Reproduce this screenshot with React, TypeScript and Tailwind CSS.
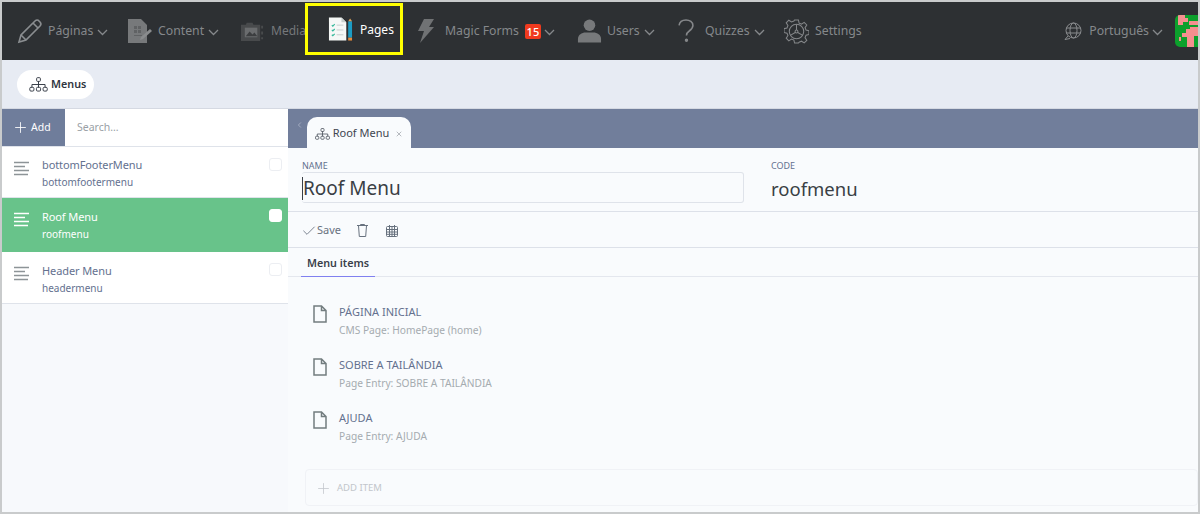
import React from 'react';
import { Check, ChevronLeft, Plus, X } from 'lucide-react';

const font = { fontFamily: '"Noto Sans", "Open Sans", sans-serif' };

const MenusIcon = ({ className }: { className?: string }) => (
  <svg viewBox="0 0 20 16" fill="none" stroke="currentColor" strokeWidth="1" className={className}>
    <rect x="8" y="0.7" width="4" height="4" rx="1" />
    <path d="M10 4.700v3.300M3 11V8h14v3M10 8v3" />
    <rect x="0.7" y="11" width="4.400" height="4" rx="1.200" />
    <rect x="7.800" y="11" width="4.400" height="4" rx="1.200" />
    <rect x="14.900" y="11" width="4.400" height="4" rx="1.200" />
  </svg>
);

const Caret = () => (
  <svg viewBox="0 0 11 7" fill="none" stroke="#85888b" strokeWidth="1.300" className="w-[11px] h-[7px] mt-[3px] shrink-0">
    <path d="M1 1l4.500 4.500L10 1" />
  </svg>
);

const Pencil = () => (
  <svg viewBox="0 0 26 26" fill="none" stroke="#8a8d90" strokeWidth="1.600" className="w-[26px] h-[26px] shrink-0">
    <path d="M2 24l2-7L18 3c1.400-1.400 3-1.400 4 0l1 1c1.200 1.200 1.200 2.600 0 4L9 22z" />
    <path d="M4 17l5 5M16 5l5 5" />
  </svg>
);

const ContentIcon = () => (
  <svg viewBox="0 0 26 26" className="w-[26px] h-[26px] shrink-0">
    <path d="M1 1h13l6 6v18H1z" fill="#77797b" />
    <path d="M7 8h3v3H7zM11 8h3v3h-3zM7 12h3v3H7zM11 12h3v3h-3zM7 17h8v1H7z" fill="#606264" />
    <path d="M14 19l9-8 2 2-9 8-3 1z" fill="#8a8c8e" />
  </svg>
);

const MediaIcon = () => (
  <svg viewBox="0 0 26 26" className="w-[25px] h-[25px] shrink-0">
    <path d="M1 6h5l1-2h6l1 2h7v17H1z" fill="#484a4c" />
    <rect x="5" y="9" width="13" height="10" fill="#6a6c6e" />
    <path d="M6 18l4-5 3 3 2-2 3 4z" fill="#3c3e40" />
    <path d="M23 7v3M23 13v3M23 19v2" stroke="#484a4c" strokeWidth="2" />
  </svg>
);

const PagesIcon = () => (
  <svg viewBox="0 0 26 26" className="w-[25px] h-[26px] shrink-0">
    <path d="M1 1h13l5 5v19H1z" fill="#f5f7f6" />
    <path d="M14 1l5 5h-5z" fill="#c9cfcd" />
    <path d="M4 9l1 1 2-2M4 14l1 1 2-2M4 19l1 1 2-2" stroke="#35b89a" strokeWidth="1.200" fill="none" />
    <path d="M9 9h7M9 14h7M9 19h7" stroke="#c5cccb" strokeWidth="1" />
    <rect x="21" y="5" width="4" height="17" fill="#1c9cc4" />
    <path d="M21 5l2-3 2 3z" fill="#d8a25e" />
    <rect x="21" y="22" width="4" height="3" fill="#e58a3c" />
  </svg>
);

const Bolt = () => (
  <svg viewBox="0 0 18 26" className="w-[18px] h-[26px] shrink-0">
    <path d="M7 1h10l-5 8h5L3 25l4-12H1z" fill="#707274" />
  </svg>
);

const UserIcon = () => (
  <svg viewBox="0 0 26 26" className="w-[25px] h-[26px] shrink-0">
    <circle cx="13" cy="7" r="6" fill="#77797b" />
    <path d="M1 25v-4c0-4 4-6.500 8-6.500h8c4 0 8 2.500 8 6.500v4z" fill="#77797b" />
  </svg>
);

const Help = () => (
  <svg viewBox="0 0 18 26" fill="none" stroke="#85878a" strokeWidth="1.700" className="w-[18px] h-[24px] shrink-0">
    <path d="M1.500 7C2 3 5 1 9 1s7.500 2.500 7.500 6c0 3-2 4.500-4 6-2 1.300-3 2.500-3 5" />
    <circle cx="9.500" cy="23" r="1" fill="#85878a" />
  </svg>
);

const Gear = () => (
  <svg viewBox="0 0 26 26" fill="none" stroke="#85878a" strokeWidth="1.100" className="w-[25px] h-[25px] shrink-0">
    <path d="M11 1h4l.7 3.300 2.500 1 2.800-1.800 2.700 2.700-1.800 2.800 1 2.500 3.100.7v4l-3.100.7-1 2.500 1.800 2.800-2.700 2.700-2.800-1.800-2.500 1L15 25h-4l-.7-3.100-2.500-1L5 22.700 2.300 20l1.800-2.800-1-2.500L0 14v-4l3.100-.7 1-2.500L2.300 4 5 1.300l2.800 1.800 2.500-1z" />
    <circle cx="13" cy="13" r="7.500" />
    <circle cx="13" cy="13" r="1.500" />
    <path d="M13 5.500v6M11.700 14L6.500 17M14.300 14l5.200 3" />
  </svg>
);

const Globe = () => (
  <svg viewBox="0 0 18 18" fill="none" stroke="#8a8c8f" strokeWidth="1" className="w-[18px] h-[18px] shrink-0">
    <circle cx="9.500" cy="8.500" r="7.500" />
    <ellipse cx="9.500" cy="8.500" rx="3.500" ry="7.500" />
    <path d="M2 6h15M2 11h15M4 14l-3 3.500 5-1" />
  </svg>
);

const Avatar = () => (
  <svg viewBox="0 0 23 32" className="w-[23px] h-[32px] rounded-l-[5px]">
    <rect width="23" height="32" fill="#0ca02c" />
    <path d="M3 0h7v3h3v4H8v3H3zM14 6h9v4h-9zM4 22h3v-4h4v-4h4v-2h8v9h-4v11h-7V22H6v4H4z" fill="#f48f8f" />
  </svg>
);

const LinesIcon = ({ light }: { light?: boolean }) => (
  <svg viewBox="0 0 15 15" fill="none" stroke={light ? '#ffffff' : '#8d9497'} strokeWidth="1.300" className="w-[15px] h-[15px]">
    <path d="M0 1.500h15M0 5.500h11M0 9.500h15M0 13.500h14" />
  </svg>
);

const FileIcon = () => (
  <svg viewBox="0 0 14 18" fill="none" stroke="#737d7f" strokeWidth="1.500" className="w-[14px] h-[18px]">
    <path d="M1 1h7.500L13 5.500V17H1zM8.500 1v4.500H13" />
  </svg>
);

const Trash = () => (
  <svg viewBox="0 0 11 13" fill="none" stroke="#68727f" strokeWidth="1" className="w-[11px] h-[13px]">
    <path d="M0 1.500h11M3.500 1.500V.5h4v1M1.500 1.500l.8 11h6.400l.8-11" />
  </svg>
);

const CalendarIcon = () => (
  <svg viewBox="0 0 12 12" fill="none" stroke="#68727f" strokeWidth="1" className="w-[12px] h-[12px]">
    <rect x="0.5" y="1.500" width="11" height="10" rx="1" />
    <path d="M0.500 4.500h11M0.500 7h11M0.500 9.300h11M3.500 0v11.500M6 1.500v10M8.500 0v11.500" />
  </svg>
);

type NavItem = { label: string; icon: React.ReactNode; width: string; gap: string; caret?: boolean; badge?: boolean };

const navLeft: NavItem[] = [
  { label: 'Páginas', icon: <Pencil />, width: 'w-[110px]', gap: 'gap-[5px]', caret: true },
  { label: 'Content', icon: <ContentIcon />, width: 'w-[113px]', gap: 'gap-[5px]', caret: true },
];

const navRight: NavItem[] = [
  { label: 'Magic Forms', icon: <Bolt />, width: 'w-[160px]', gap: 'gap-[10px]', caret: true, badge: true },
  { label: 'Users', icon: <UserIcon />, width: 'w-[100px]', gap: 'gap-[5px]', caret: true },
  { label: 'Quizzes', icon: <Help />, width: 'w-[107px]', gap: 'gap-[10px]', caret: true },
  { label: 'Settings', icon: <Gear />, width: 'w-[90px]', gap: 'gap-[6px]' },
];

const Nav = ({ item }: { item: NavItem }) => (
  <div className={`flex items-center shrink-0 ${item.width} ${item.gap}`}>
    {item.icon}
    <div className="flex items-center gap-[4px]">
      <span className="text-[12.25px] text-[#85888b]">{item.label}</span>
      {item.badge && <span className="w-[16px] h-[15px] mt-[1px] ml-[2px] -mr-[1px] bg-[#f03a1e] rounded-[2px] text-white text-[11px] leading-[16px] text-center font-medium">15</span>}
      {item.caret && <Caret />}
    </div>
  </div>
);

const menus = [
  { title: 'bottomFooterMenu', code: 'bottomfootermenu', height: 'h-[51px]', top: 'mt-[9px]' },
  { title: 'Roof Menu', code: 'roofmenu', height: 'h-[54px]', top: 'mt-[10px]', active: true },
  { title: 'Header Menu', code: 'headermenu', height: 'h-[52px]', top: 'mt-[10px]' },
];

const entries = [
  { title: 'PÁGINA INICIAL', sub: 'CMS Page: HomePage (home)' },
  { title: 'SOBRE A TAILÂNDIA', sub: 'Page Entry: SOBRE A TAILÂNDIA' },
  { title: 'AJUDA', sub: 'Page Entry: AJUDA' },
];

export default function App() {
  return (
    <div style={font} className="w-[1200px] h-[514px] overflow-hidden border-2 border-[#c9cbcc] bg-[#e7ebf3] flex flex-col">
      <header className="h-[58px] shrink-0 bg-[#2d3033] flex pl-[15px]">
        {navLeft.map((item) => <Nav key={item.label} item={item} />)}
        <div className="w-[65px] shrink-0 flex items-center gap-[6px]">
          <MediaIcon />
          <span className="text-[12px] text-[#75787b]">Media</span>
        </div>
        <div className="w-[98px] h-[52px] mt-[1px] shrink-0 border-[3px] border-[#ffff00] flex items-center pl-[20px] gap-[7px]">
          <PagesIcon />
          <span className="mt-[2px] text-[12px] text-white">Pages</span>
        </div>
        <div className="w-[14px] shrink-0" />
        {navRight.map((item) => <Nav key={item.label} item={item} />)}
        <div className="ml-auto flex items-center">
          <Globe />
          <span className="ml-[7px] text-[12.25px] text-[#85888b]">Português</span>
          <div className="ml-[3px] flex"><Caret /></div>
          <div className="ml-[12px]"><Avatar /></div>
        </div>
      </header>

      <div className="h-[49px] shrink-0 pl-[15px] pt-[10px] border-b border-[#d5d9e2]">
        <div className="w-[77px] h-[29px] pl-[12px] rounded-full bg-white flex items-center gap-[3px] text-[#2f3540]">
          <MenusIcon className="w-[19px] h-[15px] shrink-0" />
          <span className="text-[10.75px] font-semibold">Menus</span>
        </div>
      </div>

      <div className="flex-1 flex min-h-0">
        <aside className="w-[286px] shrink-0 bg-[#f7f9fc] flex flex-col">
          <div className="h-[38px] flex bg-white border-b border-[#dfe3ea]">
            <div className="w-[63px] bg-[#6f7d9b] flex items-center pl-[10px] gap-[2px] text-white">
              <Plus className="w-[17px] h-[17px] shrink-0" strokeWidth={1.2} />
              <span className="text-[10.5px]">Add</span>
            </div>
            <span className="pl-[12px] text-[10.5px] leading-[37px] text-[#9a9fa6]">Search...</span>
          </div>
          {menus.map((m) => (
            <div key={m.code} className={`${m.height} flex pl-[12px] pr-[6px] ${m.active ? 'bg-[#68c38a] text-white' : 'bg-white text-[#64718f] border-b border-[#dfe3ea]'}`}>
              <div className="mt-[14px]"><LinesIcon light={m.active} /></div>
              <div className={`ml-[13px] flex-1 ${m.top}`}>
                <div className="text-[11px] leading-[18px] tracking-[-0.1px]">{m.title}</div>
                <div className="text-[10px] leading-[16px]">{m.code}</div>
              </div>
              <div className={`mt-[11px] w-[13px] h-[13px] rounded-[3px] border ${m.active ? 'bg-white border-white' : 'bg-white border-[#eceef2]'}`} />
            </div>
          ))}
        </aside>

        <main className="flex-1 min-w-0 bg-[#f9fbfd] flex flex-col">
          <div className="h-[39px] shrink-0 bg-[#717e9b] flex pl-[7px]">
            <ChevronLeft className="w-[9px] h-[12px] mt-[10px] text-[#b0b8ca]" strokeWidth={2} />
            <div className="ml-[3px] mt-[8px] w-[104px] h-[31px] pt-[2px] bg-[#f9fbfd] rounded-t-[10px] flex items-center justify-center gap-[3px] text-[#3f4650]">
              <MenusIcon className="w-[15px] h-[12px]" />
              <span className="text-[11px]">Roof Menu</span>
              <X className="w-[8px] h-[8px] ml-[3px] text-[#a4a8ae]" strokeWidth={2.4} />
            </div>
          </div>

          <div className="h-[64px] shrink-0 flex pl-[14px] pt-[12px] border-b border-[#dde1e9]">
            <div className="w-[442px]">
              <div className="text-[9px] leading-[12px] text-[#64718f]">NAME</div>
              <div className="h-[31px] pt-[2px] bg-[#f9fbfd] border border-[#dfe3ea] border-l-0 rounded-[3px] flex items-center text-[19px] text-[#3a3f45]">
                <span className="w-[1px] h-[23px] bg-[#3a3f45]" />
                Roof Menu
              </div>
            </div>
            <div className="ml-[27px]">
              <div className="text-[9px] leading-[12px] text-[#64718f]">CODE</div>
              <div className="h-[31px] pt-[2px] flex items-center text-[18.5px] text-[#3a3f45]">roofmenu</div>
            </div>
          </div>

          <div className="h-[36px] shrink-0 flex items-center pl-[13px] pt-[2px] border-b border-[#dde1e9] text-[#68727f]">
            <Check className="w-[16px] h-[16px]" strokeWidth={1.3} />
            <span className="text-[11px]">Save</span>
            <div className="ml-[16px]"><Trash /></div>
            <div className="ml-[18px]"><CalendarIcon /></div>
          </div>

          <div className="h-[29px] shrink-0 pl-[13px] border-b border-[#e4e7ee]">
            <div className="w-[74px] h-[29px] pt-[1px] border-b border-[#8080f0] text-center text-[10.75px] leading-[28px] font-semibold text-[#3a3f4a]">Menu items</div>
          </div>

          <div className="pl-[25px] pt-[26px] flex flex-col gap-[17px]">
            {entries.map((e) => (
              <div key={e.title} className="flex h-[36px]">
                <div className="mt-[2px]"><FileIcon /></div>
                <div className="ml-[12px]">
                  <div className="text-[11px] leading-[18px] text-[#64718f]">{e.title}</div>
                  <div className="text-[10.2px] leading-[16px] mt-[1px] text-[#a5abb0]">{e.sub}</div>
                </div>
              </div>
            ))}
          </div>

          <div className="ml-[17px] mt-[24px] h-[37px] shrink-0 rounded-[4px] border border-[#f0f2f6] flex items-center pl-[9px] pt-[1px] gap-[5px] text-[#c2c6cb]">
            <Plus className="w-[17px] h-[17px] shrink-0" strokeWidth={1.1} />
            <span className="text-[9.5px]">ADD ITEM</span>
          </div>
        </main>
      </div>
    </div>
  );
}
